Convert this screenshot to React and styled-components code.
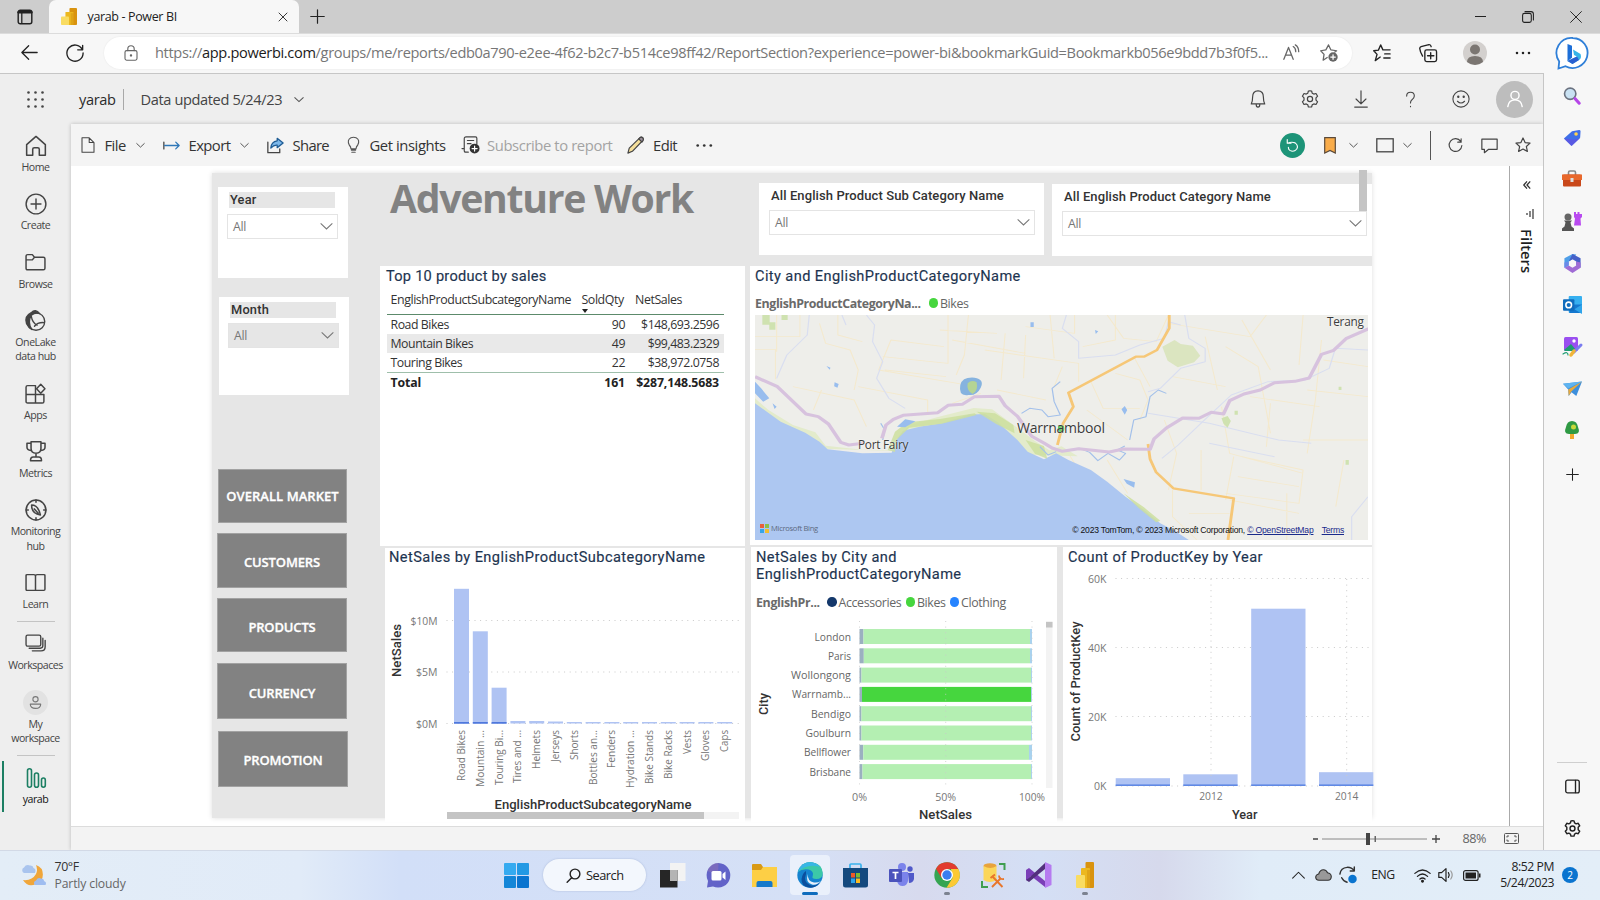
import React from "react";
import styled, { createGlobalStyle, css } from "styled-components";

const UI = `"Open Sans", "Noto Sans", sans-serif`;
const DIN = `Roboto, "Liberation Sans", sans-serif`;

const Global = createGlobalStyle`
  * { box-sizing: border-box; }
  html, body { margin: 0; padding: 0; }
  body { width: 1600px; height: 900px; overflow: hidden; font-family: ${UI}; color: #333; background: #fff; }
  svg { display: block; flex: none; overflow: visible; }
`;

/* ---------- shell ---------- */
const Screen = styled.div`
  width: 1600px; height: 900px; display: flex; flex-direction: column; overflow: hidden;
`;
const TabStrip = styled.header`
  height: 33px; flex: none; background: #cdcdcd; display: flex; align-items: center;
`;
const Slot = styled.div`
  width: ${p => p.$w}px; flex: none; display: flex; align-items: center; white-space: nowrap;
  padding-left: ${p => p.$pl || 0}px; margin-top: ${p => p.$mt || 0}px;
  justify-content: ${p => (p.$start ? "flex-start" : p.$end ? "flex-end" : "center")};
`;
const BrowserTab = styled.div`
  width: 250px; height: 33px; background: #f7f7f7; border-radius: 7px 7px 0 0; display: flex; align-items: center;
  padding-left: 12px;
`;
const TabTitle = styled.span`
  width: 190px; margin-left: 10.5px; font-size: 12.5px; letter-spacing: -0.36px; color: #222; white-space: nowrap;
`;
const Spacer = styled.div` flex: 1; `;
const AddressRow = styled.div`
  height: 40px; flex: none; background: #f7f7f7; border-top: 1px solid #dcdcdc; display: flex; align-items: center; padding-bottom: 2px;
`;
const AddressPill = styled.div`
  width: 1248px; height: 32px; flex: none; border-radius: 16px; background: #fff; display: flex; align-items: center;
  box-shadow: 0 0 2px rgba(0,0,0,.08);
`;
const Url = styled.span`
  width: 1120px; font-size: 14.6px; line-height: 20px; padding-bottom: 2px; letter-spacing: -0.345px; color: #767676; white-space: nowrap;
  b { font-weight: 400; color: #1b1b1b; }
`;
const Body = styled.div` height: 777px; flex: none; display: flex; `;
const Site = styled.main`
  width: 1544px; flex: none; background: #eee; border-top: 1px solid #c6c6c6; border-right: 1px solid #c6c6c6;
  display: flex; flex-direction: column;
`;

/* ---------- Power BI chrome ---------- */
const AppHeader = styled.div` height: 50px; flex: none; display: flex; align-items: center; `;
const HeaderText = styled.span`
  font-size: 14.6px; letter-spacing: -0.38px; color: ${p => (p.$dark ? "#2b2b2b" : "#444")}; white-space: nowrap;
`;
const VLine = styled.div` width: 1px; height: ${p => p.$h}px; background: ${p => p.$c || "#a8a8a8"}; `;
const Avatar = styled.div`
  width: 37px; height: 37px; border-radius: 50%; background: #bdbdbd; display: flex; align-items: center; justify-content: center;
`;
const AppBody = styled.div` flex: 1; display: flex; min-height: 0; `;
const Nav = styled.nav`
  width: 71px; flex: none; display: flex; flex-direction: column; align-items: center; padding-top: 10.5px;
`;
const NavItem = styled.div`
  width: 71px; margin-bottom: 18.3px; display: flex; flex-direction: column; align-items: center; gap: 3.5px;
  position: relative; flex: none;
  ${p => p.$active && css`
    &::before { content: ""; position: absolute; left: 2px; top: -6px; width: 2px; height: 51px; background: #1c7f63; }
  `}
`;
const NavIcon = styled.div` height: 22px; display: flex; align-items: center; justify-content: center; `;
const NavLabel = styled.div`
  font-size: 10.6px; line-height: 14.5px; letter-spacing: -0.48px; text-align: center; white-space: pre-line;
  color: ${p => (p.$active ? "#111" : "#444")};
`;
const NavDivider = styled.div` width: 38px; height: 1px; flex: none; background: #c4c4c4; margin: -9px 0 11px; `;
const PersonDisc = styled.div`
  width: 25px; height: 25px; flex: none; border-radius: 50%; background: #e2e2e2; display: flex; align-items: center; justify-content: center;
`;
const Workspace = styled.section`
  flex: 1; display: flex; flex-direction: column; min-width: 0; background: #fff; box-shadow: 0 0 4px rgba(0,0,0,.22); clip-path: inset(-4px 0 0 -6px);
`;
const Toolbar = styled.div` height: 42px; flex: none; background: #f4f4f4; display: flex; align-items: center; padding-left: 9px; `;
const ToolText = styled.span`
  font-size: 14.8px; letter-spacing: ${p => p.$ls ?? -0.55}px; color: ${p => (p.$off ? "#a3a3a3" : "#333")}; white-space: nowrap;
`;
const ResetButton = styled.div`
  width: 25px; height: 25px; border-radius: 50%; background: #1d9478; display: flex; align-items: center; justify-content: center;
`;
const CanvasRow = styled.div` flex: 1; display: flex; min-height: 0; `;
const Canvas = styled.div` width: 1438px; flex: none; padding: 7px 0 0 141px; `;
const FilterPane = styled.aside`
  flex: 1; border-left: 1px solid #aaa; display: flex; flex-direction: column; align-items: center; padding-top: 15px; background: #fff;
`;
const FilterTitle = styled.span`
  writing-mode: vertical-rl; font-size: 14.8px; line-height: 20px; letter-spacing: 0; font-weight: 600; color: #1e1e1e; margin-top: 10px;
`;
const StatusBar = styled.div`
  height: 24px; flex: none; background: #f3f3f3; border-top: 1px solid #dcdcdc; display: flex; align-items: center; justify-content: flex-end;
`;
const ZoomText = styled.span` font-size: 12.6px; letter-spacing: -0.5px; color: #666; `;

/* ---------- report ---------- */
const Report = styled.div`
  width: 1160px; height: 645px; background: #e6e6e6; display: flex; box-shadow: 0 0 5px rgba(0,0,0,.13);
`;
const Rail = styled.div` width: 168px; flex: none; padding: 14px 0 0 6px; display: flex; flex-direction: column; `;
const RailSlicer = styled.div`
  width: ${p => p.$w}px; height: ${p => p.$h}px; flex: none; background: #fff; padding: ${p => p.$pad};
  margin: ${p => p.$m || 0}; display: flex; flex-direction: column;
`;
const RailSlicerTitle = styled.div`
  width: 106px; height: 16px; margin-left: 2px; background: #e6e6e6; font: 500 12.8px/16px ${DIN}; letter-spacing: .2px; color: #333; padding-left: 1px;
`;
const Dropdown = styled.div`
  width: ${p => p.$w}px; height: 25px; margin-top: ${p => p.$mt}px; flex: none; border: 1px solid #e4e4e4;
  background: ${p => (p.$gray ? "#e6e6e6" : "#fff")}; display: flex; align-items: center; justify-content: space-between;
  padding: 0 4px 0 5px; font-size: 12.3px; letter-spacing: -0.3px; color: #777;
`;
const PageButton = styled.button`
  width: ${p => p.$w}px; height: ${p => p.$h}px; margin: ${p => p.$m}; padding: ${p => p.$pt ?? 2}px 0 0; flex: none; border: 1px solid #a2a2a2; background: #828282;
  color: #fff; font: 600 13px/1 ${UI}; -webkit-text-stroke: .3px #fff; letter-spacing: ${p => p.$ls ?? -0.15}px; white-space: nowrap;
`;
const MainArea = styled.div` width: 992px; flex: none; display: flex; flex-direction: column; `;
const ReportHead = styled.div` height: 93px; flex: none; display: flex; `;
const ReportTitle = styled.h1`
  width: 379px; margin: -3px 0 0; padding-left: 10px; font: 700 39.2px/56px ${UI}; letter-spacing: -1.3px; color: #828282; white-space: nowrap;
`;
const TopSlicer = styled.div`
  width: ${p => p.$w}px; height: 72px; margin: ${p => p.$m}; flex: none; background: #fff; padding: 4px 0 0 10px; position: relative;
`;
const TopSlicerTitle = styled.div` padding-left: 2px; font: 500 13px/17px ${DIN}; letter-spacing: .1px; color: #333; white-space: nowrap; `;
const ScrollThumb = styled.div` position: absolute; left: 307px; top: -14px; width: 8px; height: 41px; background: #c4c4c4; `;
const CardRow = styled.div` display: flex; flex: none; `;
const Card = styled.section`
  width: ${p => p.$w}px; height: ${p => p.$h}px; margin: ${p => p.$m || 0}; flex: none; background: #fff; padding: ${p => p.$pad || 0};
`;
const CardTitle = styled.h2`
  margin: 0; padding: ${p => p.$pad || 0}; font: 400 14.6px/17px ${DIN}; letter-spacing: ${p => p.$ls ?? 0.3}px; color: #1d3450;
  -webkit-text-stroke: .15px #1d3450; white-space: pre-line;
`;
const Legend = styled.div`
  display: flex; align-items: center; height: 16px; margin: ${p => p.$m}; font-size: 12.4px; letter-spacing: -0.38px; color: #666; white-space: nowrap;
`;
const LegendName = styled.b` width: ${p => p.$w}px; font-weight: 700; color: #6a6a6a; letter-spacing: ${p => p.$ls ?? -0.4}px; `;
const LegendItem = styled.span`
  width: ${p => p.$w}px; display: flex; align-items: center; gap: 2px;
  &::before { content: ""; width: 9.5px; height: 9.5px; flex: none; border-radius: 50%; background: ${p => p.$c}; }
`;
/* plot area that begins inside the title's first line */
const Plot = styled.div` margin-top: -${p => p.$up}px; `;
const Table = styled.div` width: 337px; margin-left: 1px; font-size: 12.3px; letter-spacing: -0.45px; color: #333; `;
const TRow = styled.div`
  display: grid; grid-template-columns: 191px 49px 97px; align-items: center; height: ${p => p.$h}px; white-space: nowrap;
  background: ${p => (p.$shade ? "#e9e9e9" : "none")};
  border-top: ${p => (p.$line ? `1px solid ${p.$line}` : "0")};
  font-weight: ${p => (p.$bold ? 700 : 400)}; color: ${p => (p.$bold ? "#222" : "#333")};
  letter-spacing: ${p => (p.$bold ? "-0.12px" : "inherit")};
  & > :first-child { padding-left: 3.5px; }
`;
const Num = styled.span` text-align: right; padding-right: ${p => p.$r}px; `;
const HeadCell = styled.span` font-size: 12.4px; letter-spacing: -0.42px; padding-left: ${p => p.$l || 0}px; position: relative; `;
const SortMark = styled.i`
  position: absolute; left: 4px; top: 18px; border: 3.5px solid transparent; border-top: 4px solid #222; border-bottom: 0;
`;
const MapBox = styled.div` width: 613px; height: 225px; margin-top: 4px; position: relative; overflow: hidden; background: #eeeeea; `;
const MapLabel = styled.span`
  position: absolute; left: ${p => p.$x}px; top: ${p => p.$y}px; font-size: ${p => p.$s}px; line-height: ${p => p.$lh || 16}px; letter-spacing: -0.25px;
  color: #3c3c3c; white-space: nowrap; text-shadow: 0 0 2px #fff;
`;
const MapCredit = styled.div`
  position: absolute; right: 24px; bottom: 4px; font: 8.6px/12px "Liberation Sans", sans-serif; letter-spacing: -0.21px; color: #111; white-space: nowrap;
  u { color: #1a2a8a; margin-right: 3px; } u + u { margin: 0 0 0 3px; }
`;
const MapBrand = styled.div`
  position: absolute; left: 5px; bottom: 6px; display: flex; align-items: center; gap: 2px; font-size: 7.6px; line-height: 11px; letter-spacing: -0.3px; color: #5c6a80;
`;

/* ---------- edge sidebar + taskbar ---------- */
const EdgeBar = styled.aside` flex: 1; background: #f7f7f7; display: flex; flex-direction: column; align-items: center; padding-top: 2px; `;
const EdgeItem = styled.div` height: ${p => p.$h || 41.8}px; display: flex; align-items: center; flex: none; `;
const EdgeDivider = styled.div` width: 30px; height: 1px; background: #cfcfcf; margin-bottom: 2px; `;
const Taskbar = styled.footer`
  height: 50px; flex: none; border-top: 1px solid #d2d9e6; display: flex; align-items: center; padding-bottom: 1px;
  background: linear-gradient(90deg, #e3edf7 0, #e1ebf8 300px, #d2dff8 400px, #d5e0f6 800px, #d7daee 920px, #d4dff5 1040px, #d6d9ec 1160px, #e0ecf8 1260px, #e3eef8 1600px);
`;
const Weather = styled.div`
  width: 449px; font-size: 12.4px; line-height: 16.5px; letter-spacing: -0.4px; color: #333; padding-top: 1px;
  small { display: block; font-size: 12.2px; color: #666; letter-spacing: -0.15px; }
`;
const SearchPill = styled.div`
  width: 103px; height: 32px; flex: none; border-radius: 16px; background: #f3f7fd; box-shadow: 0 0 2px rgba(90,110,160,.35);
  display: flex; align-items: center; padding-left: 23px; gap: 5px; font-size: 12.8px; letter-spacing: -0.5px; color: #222;
`;
const AppIcon = styled.div`
  width: 40px; height: 40px; margin: 0 2.9px; flex: none; border-radius: 4px; display: flex; align-items: center; justify-content: center; position: relative;
  background: ${p => (p.$on ? "#eaf0fb" : "none")};
  &::after { content: ""; position: absolute; bottom: 0; width: ${p => (p.$on ? 16 : 6)}px; height: 3px; border-radius: 2px;
    background: ${p => (p.$on ? "#0f6cbd" : p.$run ? "#7c8290" : "transparent")}; }
`;
const TrayText = styled.div` font-size: 12.2px; line-height: 16.5px; letter-spacing: -0.45px; color: #222; text-align: right; white-space: nowrap; `;
const Badge = styled.div` width: 16px; height: 16px; border-radius: 50%; background: #0a74cf; color: #fff; font-size: 10px; line-height: 16px; text-align: center; `;

/* ---------- icons ---------- */
const Ico = ({ s = 20, h, vb = 20, c = "#444", w = 1.2, children }) => (
  <svg width={s} height={h || s} viewBox={`0 0 ${vb} ${vb}`} fill="none" stroke={c} strokeWidth={w} strokeLinecap="round" strokeLinejoin="round">{children}</svg>
);
const Chevron = ({ s = 10, c = "#555", w = 1.1 }) => (
  <svg width={s} height={s / 2} viewBox="0 0 10 5" fill="none" stroke={c} strokeWidth={w}><path d="M.5.3 5 4.6 9.5.3" /></svg>
);
const DropChevron = () => <Chevron s={13} c="#777" w={0.8} />;
const gearPath = "M10 1.8l1.6.2.6 2.2 1.6.9 2.2-.6 1.6 2.7-1.6 1.6v2.4l1.6 1.6-1.6 2.7-2.2-.6-1.6.9-.6 2.2H8.4l-.6-2.2-1.6-.9-2.2.6-1.6-2.7L4 11.2V8.8L2.4 7.2 4 4.5l2.2.6 1.6-.9.6-2.2z";
const Gear = ({ s, c, w }) => <Ico s={s} c={c} w={w}><path d={gearPath} /><circle cx="10" cy="10" r="2.6" /></Ico>;
const PbiLogo = ({ w = 16, h = 18 }) => (
  <svg width={w} height={h} viewBox="0 0 18 26" preserveAspectRatio="none">
    <rect x="9.5" y="0" width="8.5" height="26" rx="1" fill="#d9930f" />
    <rect x="5" y="6" width="9" height="20" rx="1" fill="#ecb81f" />
    <path d="M0 14q0-1 1-1h7q1 0 1 1v12H1q-1 0-1-1z" fill="#f9dc62" />
    <path d="M14 8v18h-3V8z" fill="#c97f0b" opacity=".35" />
  </svg>
);

const navTop = [
  ["Home", <Ico s={22} w={1.4}><path d="M1.500 8.800 10 1.300l8.500 7.500V18.500h-5.500v-5.500a1.500 1.500 0 0 0-1.500-1.500h-3A1.500 1.500 0 0 0 7 13v5.500H1.500z" /></Ico>],
  ["Create", <Ico s={22} w={1.3}><circle cx="10" cy="10" r="9" /><path d="M10 5.500v9M5.500 10h9" /></Ico>],
  ["Browse", <Ico s={21} w={1.4}><path d="M1 4q0-1.500 1.500-1.500h4.500l2 2.500h8.500Q19 5 19 6.500v9q0 1.500-1.500 1.500h-15Q1 17 1 15.500zM1 7.500h6L9 5" /></Ico>],
  ["OneLake\ndata hub", <Ico s={21} w={1.3}><path d="M6 2.500Q-1 6 1.500 13q2 4 5 5.500Q2 12 6 5q4-3 8-1.500Q10-1.500 6 2.500z" fill="#444" /><circle cx="10.500" cy="11" r="8.300" /><path d="M6 6q1 6 5.500 8.500M9 15.500q3-4 9.500-3.500" /></Ico>],
  ["Apps", <Ico s={21} w={1.4}><path d="M1 4q0-1.500 1.500-1.500H10v8.500H1zM1 11h9v8H2.500Q1 19 1 17.500zM10 11h8v6.500q0 1.500-1.500 1.500H10z" /><path d="m15 1.200 4 4.300-4 4.300-4-4.300z" /></Ico>],
  ["Metrics", <Ico s={22} w={1.4}><path d="M5.500 1.500h9v6q0 4.500-4.500 4.500T5.500 7.500zM5.500 3H1.800v3.500q0 2.500 3.700 3M14.500 3h3.700v3.500q0 2.500-3.700 3M10 12v3.500M5 18.800q0-3.300 2.500-3.300h5q2.500 0 2.500 3.300z" /></Ico>],
  ["Monitoring\nhub", <Ico s={22} w={1.4}><circle cx="10" cy="10" r="9" /><path d="M6 5.500q6 0 8 9-8-1-8-9zM10 1v2M10 17v2M1 10h2M17 10h2M8.500 9l3.500 4" /></Ico>],
  ["Learn", <Ico s={21} w={1.4}><path d="M1 3.500Q1 2.500 2 2.500h6.500q1.500 0 1.500 1.500v13.500H2q-1 0-1-1zM19 3.500q0-1-1-1h-6.500Q10 2.500 10 4v13.500h8q1 0 1-1z" /></Ico>],
];

function NavButton({ label, icon, active }) {
  return <NavItem $active={active}><NavIcon>{icon}</NavIcon><NavLabel $active={active}>{label}</NavLabel></NavItem>;
}

function SideNav() {
  return (
    <Nav>
      {navTop.map(([l, i]) => <NavButton key={l} label={l} icon={i} />)}
      <NavDivider />
      <NavButton label="Workspaces" icon={<Ico s={21} w={1.3}><rect x="1" y="2" width="14" height="10.500" rx="1.500" /><path d="M17 5v7q0 2.500-2.500 2.500H4M19.200 7v6q0 4-4 4H7" /></Ico>} />
      <NavButton label={"My\nworkspace"} icon={<PersonDisc><Ico s={13} w={1.7} c="#777"><circle cx="10" cy="5" r="4" /><path d="M2 12.500h16q0 6.500-8 6.500t-8-6.500z" /></Ico></PersonDisc>} />
      <NavDivider />
      <NavButton active label="yarab" icon={<Ico s={20} w={1.6} c="#1c7f63"><rect x="1.500" y=".8" width="4" height="18.400" rx="2" /><rect x="8.500" y="5" width="4" height="14.200" rx="2" /><rect x="15.500" y="10" width="3.800" height="9.200" rx="1.900" /></Ico>} />
    </Nav>
  );
}

function ReportToolbar() {
  return (
    <Toolbar>
      <Slot $w={24.5} $start><Ico s={16} h={18} w={1.3}><path d="M2.500 1h9l6 6v12h-15zM11.500 1v6h6" /></Ico></Slot>
      <Slot $w={31} $start><ToolText>File</ToolText></Slot>
      <Slot $w={27} $start><Chevron s={9} /></Slot>
      <Slot $w={26} $start><Ico s={17} c="#2e77b8" w={1.5}><path d="M1 6v8" stroke="#444" /><path d="M2 10h17M15 6l4 4-4 4" /></Ico></Slot>
      <Slot $w={51} $start><ToolText>Export</ToolText></Slot>
      <Slot $w={27} $start><Chevron s={9} /></Slot>
      <Slot $w={26} $start>
        <Ico s={17} w={1.5}><path d="M1 6v12.500h14V14" /><path d="M12 1.500 19 7l-7 5.500V9.500Q8 9 4.500 13 5 5.500 12 4.500z" fill="#7db8ea" stroke="#205d95" /></Ico>
      </Slot>
      <Slot $w={52} $start><ToolText $ls={-0.65}>Share</ToolText></Slot>
      <Slot $w={25} $start><Ico s={17} h={18} w={1.3} c="#555"><path d="M7 14.500Q7 12 5 10 2 4 7 1.500q3-1.200 6 0Q18 4 15 10q-2 2-2 4.500zM7.500 16h5M8 18.500h4" /></Ico></Slot>
      <Slot $w={92} $start><ToolText $ls={-0.42}>Get insights</ToolText></Slot>
      <Slot $w={25.5} $start>
        <Ico s={18} w={1.3}><path d="M7 18H4q-1.500 0-1.500-1.500V14H0M2.500 14V3Q2.500 1 4.500 1H15q1.500 0 1.500 1.500V9M6 5h7M6 8.500h4" /><circle cx="14" cy="14" r="5.500" fill="#333" stroke="none" /><path d="M14 11.200v5.600M11.200 14h5.600" stroke="#fff" /></Ico>
      </Slot>
      <Slot $w={140} $start><ToolText $off $ls={-0.4}>Subscribe to report</ToolText></Slot>
      <Slot $w={26} $start><Ico s={18} w={1.3}><path d="M1 19l1.500-5.500L14.500 1.800q1.500-1.300 3 0 1.500 1.700 0 3.200L6 17z" fill="#f5df9a" /><path d="m13 3.200 3.600 3.500 1-1.200q1.300-2-.2-3.600-1.800-1.300-3.200.2z" fill="#9a8f9a" /></Ico></Slot>
      <Slot $w={43} $start><ToolText>Edit</ToolText></Slot>
      <Slot $w={18} $start><Ico s={17}><g fill="#333" stroke="none"><circle cx="2" cy="10" r="1.600" /><circle cx="9.700" cy="10" r="1.600" /><circle cx="17.400" cy="10" r="1.600" /></g></Ico></Slot>
      <Spacer />
      <Slot $w={56}><ResetButton><Ico s={15} c="#fff" w={1.5}><path d="M3 2v5h5M3.500 7Q9 4.500 13.500 6.500q5 4 2 8.500-4 4.500-9 1.500-2-1.500-2-4" /></Ico></ResetButton></Slot>
      <Slot $w={19}><svg width="12" height="17" viewBox="0 0 12 17"><path d="M.7.700h10.600v15.300L6 13.500.7 16z" fill="#f9ac4a" stroke="#5b4a3a" strokeWidth="1.200" /></svg></Slot>
      <Slot $w={27}><Chevron s={9} /></Slot>
      <Slot $w={36}><svg width="18" height="15"><rect x=".8" y=".8" width="16.400" height="13" fill="none" stroke="#444" strokeWidth="1.300" /></svg></Slot>
      <Slot $w={24.5} $start><Chevron s={9} /></Slot>
      <Slot $w={7}><VLine $h={29} $c="#555" /></Slot>
      <Slot $w={43}><Ico s={15} w={1.5}><path d="M17 4.500A8.500 8.500 0 1 0 18.500 10M17.500 1v4.500H13" /></Ico></Slot>
      <Slot $w={25}><Ico s={17} w={1.4}><path d="M1 2.500h18v12H9l-5 4v-4H1z" /></Ico></Slot>
      <Slot $w={41}><Ico s={16} w={1.5}><path d="m10 1.200 2.600 5.800 6.200.7-4.600 4.200 1.300 6.200L10 15l-5.500 3.100 1.300-6.200L1.200 7.700 7.400 7z" /></Ico></Slot>
    </Toolbar>
  );
}

/* ---------- charts ---------- */
const Grid = props => <line stroke="#c9c9c9" strokeWidth="1" strokeDasharray="1 4.600" {...props} />;
const T = ({ w, s = 11, f = UI, c = "#777", children, ...r }) => (
  <text fontSize={s} fontFamily={f} fill={c} {...(w ? { textLength: w, lengthAdjust: "spacingAndGlyphs" } : {})} {...r}>{children}</text>
);

const subcats = [
  ["Road Bikes", 134.7, 51], ["Mountain ...", 92.2, 57], ["Touring Bi...", 35.8, 55], ["Tires and ...", 2.5, 53], ["Helmets", 2.5, 39],
  ["Jerseys", 2, 32], ["Shorts", 1.5, 30], ["Bottles an...", 1.5, 55], ["Fenders", 1.5, 38], ["Hydration ...", 1.5, 58],
  ["Bike Stands", 1.5, 54], ["Bike Racks", 1.5, 49], ["Vests", 1.5, 24], ["Gloves", 1.5, 31], ["Caps", 1.5, 22],
];

/* chart viewBoxes use page coordinates, starting at the plot's own corner */
function SubcategoryChart() {
  return (
    <svg width="360" height="274" viewBox="385 548 360 274">
      {[620.5, 672, 723.5].map(y => <Grid key={y} x1="446.500" x2="739.500" y1={y} y2={y} />)}
      {[["$10M", 620.5, 27], ["$5M", 672, 21.5], ["$0M", 723.5, 21.5]].map(([t, y, w]) => <T key={t} x="437.500" y={y + 4} textAnchor="end" w={w}>{t}</T>)}
      {subcats.map(([n, h, w], i) => {
        const x = 454 + i * 18.8;
        return (
          <g key={n}>
            <rect x={x} y={723.5 - h} width="15" height={h} fill="#afc3f3" />
            {i < 3 && <rect x={x} y="722" width="15" height="1.700" fill="#4f78dd" />}
            <T transform={`translate(${x + 11} 730) rotate(-90)`} textAnchor="end" w={w} s={10.8}>{n}</T>
          </g>
        );
      })}
      <T f={DIN} s={13} c="#333" fontWeight="500" w={53} transform="translate(400.500 650.500) rotate(-90)" textAnchor="middle">NetSales</T>
      <T f={DIN} s={13} c="#333" fontWeight="500" w={197} x="593" y="808.500" textAnchor="middle">EnglishProductSubcategoryName</T>
      <rect x="447" y="812" width="292" height="7" fill="#f3f3f3" />
      <rect x="447" y="812" width="257" height="7" fill="#c4c4c4" />
    </svg>
  );
}

const cities = [
  ["London", 4, 2, 36.5], ["Paris", 4.3, 2, 23], ["Wollongong", 2, 1, 60], ["Warrnamb...", 2.5, 1, 59],
  ["Bendigo", 2, 1, 40], ["Goulburn", 2, 1, 45.5], ["Bellflower", 3.8, 3, 47], ["Brisbane", 3, 1, 41.5],
];
function CityChart() {
  return (
    <svg width="306" height="207" viewBox="751 615 306 207">
      {cities.map(([n, a, b, w], i) => {
        const y = 629 + i * 19.3, on = i === 3;
        return (
          <g key={n}>
            <rect x="859.500" y={y} width={a} height="15" fill="#9bb0c0" />
            <rect x={859.5 + a} y={y} width={172.5 - a - b} height="15" fill={on ? "#46d63e" : "#b4efb2"} />
            <rect x={1032 - b} y={y} width={b} height="15" fill="#a9d2ee" />
            <T x="851" y={y + 11.5} textAnchor="end" w={w} c="#666">{n}</T>
          </g>
        );
      })}
      {[859.5, 945.7, 1032].map(x => <Grid key={x} x1={x} x2={x} y1="621" y2="788" strokeOpacity=".8" />)}
      <T x="859.500" y="801" textAnchor="middle" w={15}>0%</T>
      <T x="945.700" y="801" textAnchor="middle" w={21}>50%</T>
      <T x="1032" y="801" textAnchor="middle" w={26}>100%</T>
      <T f={DIN} s={13} c="#333" fontWeight="500" w={53} x="945.500" y="819" textAnchor="middle">NetSales</T>
      <T f={DIN} s={13} c="#333" fontWeight="500" w={22} transform="translate(767.500 704) rotate(-90)" textAnchor="middle">City</T>
      <rect x="1046" y="621" width="6.500" height="167" fill="#f3f3f3" />
      <rect x="1046" y="622" width="6.500" height="5.500" fill="#c4c4c4" />
    </svg>
  );
}

function YearChart() {
  return (
    <svg width="309" height="274" viewBox="1063 548 309 274">
      {[["60K", 578.5], ["40K", 647.5], ["20K", 716.5], ["0K", 786]].map(([t, y]) => (
        <g key={t}>
          <Grid x1="1115.500" x2="1373" y1={y} y2={y} />
          <T x="1106.500" y={y + 4} textAnchor="end" w={t === "0K" ? 12.5 : 18.5}>{t}</T>
        </g>
      ))}
      {[[1115.7, 7.8], [1183.3, 11.7], [1251.2, 177.3], [1319, 13.8]].map(([x, h]) => (
        <g key={x}>
          <rect x={x} y={786 - h} width="54.300" height={h} fill="#afc3f3" />
          <rect x={x} y="784.400" width="54.300" height="1.600" fill="#6089e4" />
        </g>
      ))}
      {[1211, 1346.7].map(x => <Grid key={x} x1={x} x2={x} y1="579" y2="786" />)}
      <T x="1211" y="800" textAnchor="middle" w={23.5}>2012</T>
      <T x="1346.700" y="800" textAnchor="middle" w={23.5}>2014</T>
      <T f={DIN} s={13} c="#333" fontWeight="500" w={25.5} x="1244.700" y="818.500" textAnchor="middle">Year</T>
      <T f={DIN} s={13} c="#333" fontWeight="500" w={120} transform="translate(1080 681.500) rotate(-90)" textAnchor="middle">Count of ProductKey</T>
    </svg>
  );
}

function MapDrawing() {
  return (
    <svg width="613" height="225" viewBox="37 165 1502 675" preserveAspectRatio="none" fill="none" strokeLinejoin="round">
      <g stroke="#f4e9cd" strokeWidth="2.600">
        <path d="M37 230h110V165M37 268h50v90M90 165v110M195 190l15 60 60 20 20 60-10 60M240 165v60l60 20M370 240l-30 90 240 50M370 240l130 20M350 290l160 20v-145M355 330l150 20M490 210l140 10M520 240l180 40M560 165l-10 120-20 60M650 220l-10 140M700 225l-5 130M600 270l230 40v55M760 165l10 130M700 200l120 20v-55M840 260l80-20v-75M900 165l40 70 80 10 30-80" />
        <path d="M790 320l-20 60M860 365l30 80h90M920 340l60 20 20 60-20 60M965 290l40 90M1050 190l200 40 40-65M1140 230l30 160M1060 350l130 30M1190 260l80 60 30 200M1230 180l70 150M1380 165l-10 150M1425 240l-15 180-20 160M1250 410l170 30M1300 430l-10 130M1180 440l20 140 180 60M1040 480l30 100-20 110M1130 570v120M1210 590l-20 130M1230 590l150 40-10 100-180-30M1220 650l150 30M1200 720l170 40M1380 540h159M1390 390l149 20M1430 300l109 20M1340 700v140M1480 600l-20 140M1100 760h100M1060 690v80l60 70M130 380l150 40 30 80M200 390l-20 60M290 380l170 40v40M520 430l70-30M630 390l120 30M850 450l100 90M800 570l60 120M900 600l50 100" />
      </g>
      <g stroke="#d9def0" strokeWidth="3">
        <path d="M170 165l-5 60-50 60-25 70M310 165l20 30-5 50 25 60-15 50 30 60 40 30M800 165l-10 40 40 40v50l90-10 60-30 60-20 10-50 30 10M1090 165l10 70 40 30v40l-60 20-50 60-30 10M1539 270l-80-5-15 60-60 35-90 5-90 40-70 80-60 70-40 40M1000 460l150 30 170 50 80 10M1539 710l-40 60v70M1150 550l160 40M250 165l10 30" />
      </g>
      <path d="M37 415L70 450l60 45 55 22 25 40 90 12 80 2 8-30 25-45 70-24 90-28 45 4 45 40 60 55 35 28 30-12 40 30L37 560z" fill="#e3ebcb" />
      <path d="M37 430L100 485 160 518 195 545 215 568 300 580 372 578 380 545 400 512 440 500 495 490 560 464 600 462 632 487 680 540 705 575 745 598 775 580 805 600 860 630 900 665 945 710 990 750 1030 790 1065 812 1100 840H37z" fill="#adc7f1" />
      <path d="M362 570l18-55 30-28 80-10 85-17 5 5-85 26-80 12-30 35-5 38zM580 455l45 5 45 35 3 25-45-28zM700 540l45 18 8 38-30-15zM940 700l50 42 40 40-10 5-45-45z" fill="#cddf9f" opacity=".85" />
      <path d="M1035 260l30-20 15 12 30 5 18 30-15 20-40 15-25-20z" fill="#dbe5c0" />
      <path d="M55 165h18v22h14v22h-15v-15H55zM102 165h15v15h-15zM1180 475l15-7 8 15-8 20-10-12zM1484 600h8v14h-8zM1467 380h7v10h-7zM1212 452h8v12h-8z" fill="#cfe2b0" />
      <path d="M540 375q5-25 35-22 25 5 15 30-10 25-30 22-25 5-20-30z" fill="#86b3df" />
      <path d="M558 370q10-12 22-3 5 25-10 35-15-10-12-32z" fill="#b4d494" />
      <g fill="#98bdee">
        <path d="M37 365l15 20 20 30-15 10-20-25zM80 430l10 10-5 7zM232 367l10 5-3 11-8-4zM385 500l20-22 25 6-25 18zM935 448l8-10 6 12-6 14zM712 187h8v14h-8zM940 657l28 10-2 16-18-12zM870 210l8 4-6 8zM212 318l10 5-2 6z" />
      </g>
      <g stroke="#a3c0ea" strokeWidth="3">
        <path d="M690 460l20-15 30 5 15 20 30-5-15-40-5-40 20-20M812 570l20-5 25 12 20 25 25-22 28 20 15-20-20-10 18-12M955 540l10-60 30-10 10-60 20-20 20 10M345 490l10 20-5 30M735 560l20 25 20-10" />
      </g>
      <g strokeLinecap="butt">
        <path d="M1052 165v40l-30 65-32 20-20 0-165 108 12 42-25 50-14 65M1000 552l5 45 15 40 42 48 148 30-14 125" stroke="#f6c777" strokeWidth="7" />
        <path d="M37 350l55 30 70 82 30 8 25 22 30 55 20 8 35-5M348 535l10-40 18-17 24-12 85-8 25-22 35-3 30-23 60-1 15 28 30 32 35 60 30 20 20 15 25 10 40-8 75 10 35-9 65 1 10-32 30-32 40-30 40 1 30-18 30 5 15-40 35-20 40-12 35-22 50-4 35-10 30-71 30-12 30-35 75-40" stroke="#d7c2de" strokeWidth="9" />
      </g>
      <ellipse cx="787" cy="506" rx="8" ry="10" fill="#2fc32f" />
    </svg>
  );
}

function ReportPage() {
  return (
    <Report>
      <Rail>
        <RailSlicer $w={130} $h={91} $pad="5px 9px 0">
          <RailSlicerTitle>Year</RailSlicerTitle>
          <Dropdown $w={111} $mt={6}>All<DropChevron /></Dropdown>
        </RailSlicer>
        <RailSlicer $w={130} $h={98} $pad="5px 9px 0 9px" $m="19px 0 0 1px">
          <RailSlicerTitle>Month</RailSlicerTitle>
          <Dropdown $w={111} $mt={5} $gray>All<DropChevron /></Dropdown>
        </RailSlicer>
        <PageButton $w={129} $h={54} $m="73.500px 0 0" $ls={0.05}>OVERALL MARKET</PageButton>
        <PageButton $w={130} $h={55} $m="10px 0 0 -1px" $pt={5}>CUSTOMERS</PageButton>
        <PageButton $w={130} $h={54} $m="10.500px 0 0 -1px" $pt={4}>PRODUCTS</PageButton>
        <PageButton $w={130} $h={56} $m="11px 0 0 -1px" $pt={4}>CURRENCY</PageButton>
        <PageButton $w={130} $h={56} $m="11.500px 0 0" $pt={3}>PROMOTION</PageButton>
      </Rail>
      <MainArea>
        <ReportHead>
          <ReportTitle>Adventure Work</ReportTitle>
          <TopSlicer $w={285} $m="10px 0 0 0">
            <TopSlicerTitle>All English Product Sub Category Name</TopSlicerTitle>
            <Dropdown $w={266} $mt={6}>All<DropChevron /></Dropdown>
          </TopSlicer>
          <TopSlicer $w={320} $m="11px 0 0 8px">
            <TopSlicerTitle>All English Product Category Name</TopSlicerTitle>
            <Dropdown $w={305} $mt={6}>All<DropChevron /></Dropdown>
            <ScrollThumb />
          </TopSlicer>
        </ReportHead>
        <CardRow>
          <Card $w={365} $h={280} $pad="2px 0 0 6px">
            <CardTitle $ls={0.25}>Top 10 product by sales</CardTitle>
            <Table>
              <TRow $h={29}>
                <HeadCell>EnglishProductSubcategoryName</HeadCell>
                <HeadCell $l={3.5}>SoldQty<SortMark /></HeadCell>
                <HeadCell $l={8}>NetSales</HeadCell>
              </TRow>
              <TRow $h={20} $line="#5c8a6b"><span>Road Bikes</span><Num $r={2}>90</Num><Num $r={5}>$148,693.2596</Num></TRow>
              <TRow $h={19} $shade><span>Mountain Bikes</span><Num $r={2}>49</Num><Num $r={5}>$99,483.2329</Num></TRow>
              <TRow $h={19}><span>Touring Bikes</span><Num $r={2}>22</Num><Num $r={5}>$38,972.0758</Num></TRow>
              <TRow $h={20} $line="#9fbfab" $bold><span>Total</span><Num $r={2}>161</Num><Num $r={5}>$287,148.5683</Num></TRow>
            </Table>
          </Card>
          <Card $w={622} $h={279} $m="0 0 0 5px" $pad="2px 0 0 5px">
            <CardTitle $ls={0.4}>City and EnglishProductCategoryName</CardTitle>
            <Legend $m="10px 0 0">
              <LegendName $w={173.5}>EnglishProductCategoryNa...</LegendName>
              <LegendItem $w={60} $c="#46d63e">Bikes</LegendItem>
            </Legend>
            <MapBox>
              <MapDrawing />
              <MapLabel $x={103} $y={121} $s={11.8}>Port Fairy</MapLabel>
              <MapLabel $x={262} $y={105} $s={14}>Warrnambool</MapLabel>
              <MapLabel $x={572} $y={0} $s={11.8} $lh={12}>Terang</MapLabel>
              <MapBrand>
                <svg width="9" height="9"><path d="M0 0h4v4H0z" fill="#e8613a" /><path d="M5 0h4v4H5z" fill="#8bc04a" /><path d="M0 5h4v4H0z" fill="#35a5e8" /><path d="M5 5h4v4H5z" fill="#f2bd30" /></svg>
                Microsoft Bing
              </MapBrand>
              <MapCredit>© 2023 TomTom, © 2023 Microsoft Corporation, <u>© OpenStreetMap</u> <u>Terms</u></MapCredit>
            </MapBox>
          </Card>
        </CardRow>
        <CardRow>
          <Card $w={360} $h={274} $m="2px 0 0 5px">
            <CardTitle $pad="1px 0 0 4px" $ls={0.42}>NetSales by EnglishProductSubcategoryName</CardTitle>
            <Plot $up={18}><SubcategoryChart /></Plot>
          </Card>
          <Card $w={306} $h={275} $m="1px 0 0 6px">
            <CardTitle $pad="2px 0 0 5px" $ls={0.38}>{"NetSales by City and\nEnglishProductCategoryName"}</CardTitle>
            <Legend $m="11px 0 5px 5px">
              <LegendName $w={71} $ls={-0.35}>EnglishPr...</LegendName>
              <LegendItem $w={78.5} $c="#14386b">Accessories</LegendItem>
              <LegendItem $w={44} $c="#46d63e">Bikes</LegendItem>
              <LegendItem $w={60} $c="#2684ff">Clothing</LegendItem>
            </Legend>
            <CityChart />
          </Card>
          <Card $w={309} $h={275} $m="1px 0 0 6px">
            <CardTitle $pad="2px 0 0 5px" $ls={0.36}>Count of ProductKey by Year</CardTitle>
            <Plot $up={18}><YearChart /></Plot>
          </Card>
        </CardRow>
      </MainArea>
    </Report>
  );
}

/* ---------- edge sidebar icons ---------- */
const edgeIcons = [
  <Ico s={18}><circle cx="8" cy="7.500" r="6.300" fill="#c9e2f3" stroke="#6b7280" strokeWidth="1.800" /><path d="m13.500 13 4.500 5" stroke="#b646e8" strokeWidth="3.500" /></Ico>,
  <Ico s={18}><path d="M10 2.500 18 1q1.500 0 1.500 1.500L19 10l-9.500 9L1 10.500z" fill="#3f6fe8" stroke="none" /><path d="M1 10.500 9.500 19l9-8.500L12 12z" fill="#6a4be0" stroke="none" opacity=".6" /><circle cx="14.500" cy="5.500" r="2" fill="#ffd34d" stroke="none" /></Ico>,
  <Ico s={20}><path d="M6.500 6V3.500Q6.500 2 8 2h4q1.500 0 1.500 1.500V6" stroke="#888" strokeWidth="1.600" /><rect x="1" y="5.500" width="18" height="12" rx="1" fill="#c9481a" stroke="none" /><path d="M0 5.500h20v5.500H0z" fill="#e8682c" stroke="none" /><rect x="8.500" y="9" width="3" height="4" fill="#ddd" stroke="none" /></Ico>,
  <Ico s={20}><path d="M12 1h2v2h1.500V1h2v2H20V6l-1.500 1.500.5 7h-7l1-7L12 6z" fill="#b94af0" stroke="none" /><circle cx="6" cy="6" r="3.500" fill="#666" stroke="none" /><path d="M2 9.500h8l-1.500 2 1 4 2.500 2V20H0v-2.500l2.500-2 1-4z" fill="#555" stroke="none" /></Ico>,
  <Ico s={19}><path d="M10 0 1.500 4.500v10L6 12V8l4-2.500 4-5z" fill="#4f9fe8" stroke="none" /><path d="m10 0 8.500 4.500v10L14 12V8l-4-2.500L6 8z" fill="#4661c8" stroke="none" /><path d="M18.500 9v5.500L10 20l-8.500-5.500L6 12l4 2.500 4-2.500V8z" fill="#a06cd5" stroke="none" /><path d="M6 8v4l-4.500 2.500V9z" fill="#6c8ae8" stroke="none" /></Ico>,
  <Ico s={19}><rect x="6" y="1" width="14" height="18" rx="1" fill="#36b0f0" stroke="none" /><path d="M6 10h14l-1 9H7z" fill="#1478cf" stroke="none" /><path d="m20 10-8 5 8 5z" fill="#2fa4ea" stroke="none" /><rect x="0" y="4.500" width="12" height="12" rx="1" fill="#0f6cbd" stroke="none" /><circle cx="6" cy="10.500" r="3" stroke="#fff" strokeWidth="1.600" /></Ico>,
  <Ico s={20}><rect x="2" y="0" width="14" height="14" rx="1.500" fill="#9a4ff0" stroke="none" /><path d="m2 13 7-6 5 6v1H3z" fill="#1f9d72" stroke="none" /><circle cx="12" cy="4" r="1.700" fill="#fff" stroke="none" /><path d="m19 8-7 7" stroke="#7a7cf0" strokeWidth="3" /><path d="m12 14-3 4" stroke="#f0b53a" strokeWidth="3.500" /><path d="M1 17q5-3 5 1" stroke="#1f9d72" /></Ico>,
  <Ico s={19}><path d="M0 5 20 2.500 14 18l-5-4-3 4-.5-7z" fill="#3d8fdc" stroke="none" /><path d="M5.500 11 20 2.500 8.500 13.500 6 18z" fill="#e8a93c" stroke="none" /><path d="M0 5 20 2.500 5.500 10z" fill="#5fb4f0" stroke="none" /></Ico>,
  <Ico s={20}><path d="M8 13h4v6H8z" fill="#f0a92c" stroke="none" /><path d="M10 1q5 0 6 6 3 7-3 7H7q-6 0-3-7 1-6 6-6z" fill="#2f9a44" stroke="none" /><circle cx="11.500" cy="7" r="2.500" fill="#c7d93c" stroke="none" /></Ico>,
];

function BingLogo() {
  return (
    <svg width="32" height="33" viewBox="0 0 32 33">
      <path d="M16 1a15 15 0 1 1-7.500 28.200L1.500 31.500l.7-7A15 15 0 0 1 16 1z" fill="#fff" stroke="#2f7fd8" strokeWidth="1.800" />
      <path d="m10.500 7 4.500 1.800v12l-4.500 3.500z" fill="#1d6fd8" />
      <path d="m16 12.500 7.500 4.500q1.500 4-1.500 6l-6.500 4-5-3 9.500-4.500-3-1.500z" fill="#35b4e8" />
      <path d="M10.500 24l9.500-4.500 2 3.500-6.500 4z" fill="#2a5fd0" />
    </svg>
  );
}

/* ---------- taskbar icons ---------- */
const taskIcons = [
  { i: <svg width="26" height="25"><rect x="10" y="0" width="15.500" height="18" fill="#f3f3f3" /><rect x="0" y="7" width="17.500" height="17.500" fill="#262626" /><rect x="10" y="7" width="7.500" height="11" fill="#b4b4b4" /></svg> },
  { i: <svg width="25" height="25" viewBox="0 0 25 25"><path d="M12.500 0A12.300 12.300 0 1 1 7 23.500L1 24.500 2 18A12.300 12.300 0 0 1 12.500 0z" fill="#6263c8" /><path d="M12.500 0a12 12 0 0 0-11 8L12 12z" fill="#8a72b8" opacity=".6" /><rect x="5.500" y="8" width="10" height="9.500" rx="1.500" fill="#fff" /><path d="m16.500 11 3-2.500v8.500l-3-2.500z" fill="#fff" /></svg> },
  { i: <svg width="25" height="23" viewBox="0 0 25 23"><path d="M0 1q0-1 1-1h8l2 3v5H0z" fill="#d99a16" /><path d="M0 6h9l2-3h14v20H0z" fill="#fdcf45" /><path d="M4.500 23v-4q0-2 2-2h12q2 0 2 2v4z" fill="#1579cb" /></svg> },
  { on: true, i: <svg width="26" height="26" viewBox="0 0 26 26"><circle cx="13" cy="13" r="12.700" fill="#1583cf" /><path d="M1 10Q4 0 14 .3 25 1.500 25.700 11q0 6-6.500 6-5 0-3.500-3 1.500-5-4-6.500Q5 6.500 1 10z" fill="#3cc8a8" /><path d="M1 10Q4 0 14 .3 20 1 23 5 10 1 1 10z" fill="#38b6e6" /><path d="M9 12q-3 8 4 11 5 2 10-2.500-4 6-11 5Q4 24 4.500 17 5.500 11 9 9z" fill="#0b4f9e" /><path d="M11 12q-1 7 6 8.500 4 .5 7-1.500-4 4.500-9 3.500-7-2-4-10.500z" fill="#eaf0fb" /></svg> },
  { i: <svg width="25" height="25" viewBox="0 0 25 25"><path d="M7 6V2q0-1 1-1h9q1 0 1 1v4" fill="none" stroke="#3ab1ec" strokeWidth="1.700" /><path d="M0 5h25v17q0 2.500-2.500 2.500h-20Q0 24.500 0 22z" fill="#14497e" /><path d="M8 10h4v4.500H8z" fill="#f05a28" /><path d="M13 10h4v4.500h-4z" fill="#7fbb32" /><path d="M8 15.500h4V20H8z" fill="#2aa4ec" /><path d="M13 15.500h4V20h-4z" fill="#fcbb20" /></svg> },
  { i: <svg width="25" height="24" viewBox="0 0 25 24"><circle cx="13" cy="4" r="4" fill="#7b83eb" /><circle cx="21" cy="6" r="2.700" fill="#5059c9" /><path d="M8 9h11v9q-1 5-5.500 5T8 18z" fill="#7b83eb" /><path d="M19 10h6v6q-1 4-5 4z" fill="#5059c9" /><rect x="0" y="6" width="13" height="13" rx="1" fill="#4b53bc" /><path d="M3.500 9.500h6M6.500 9.500v6.500" stroke="#fff" strokeWidth="1.700" /></svg> },
  { run: true, i: <svg width="26" height="26" viewBox="0 0 26 26"><circle cx="13" cy="13" r="12.700" fill="#35a552" /><path d="M2 6.700A12.700 12.700 0 0 1 24.200 7H13L7.500 16z" fill="#e23c2f" /><path d="M24.300 7A12.700 12.700 0 0 1 12.500 25.700L18.500 16 17 7z" fill="#fcc934" /><circle cx="13" cy="13" r="6" fill="#fff" /><circle cx="13" cy="13" r="4.700" fill="#3a7df0" /></svg> },
  { i: <svg width="25" height="25" viewBox="0 0 25 25"><ellipse cx="9" cy="3" rx="6.500" ry="2.700" fill="#e8a33c" /><path d="M2.500 3v14q6 4 13 0V3q-6 4-13 0z" fill="#fbd65a" /><path d="M18 1h5.500v6M1 18v6h6" fill="none" stroke="#3f9e4f" strokeWidth="2" /><path d="m11 13 10.500 11M20 15 11 24" stroke="#e8762c" strokeWidth="1.900" /><path d="M18 12.500q0 4 5 3.500M9.500 15l4.500-3.500" fill="none" stroke="#e8762c" strokeWidth="1.800" /></svg> },
  { i: <svg width="26" height="26" viewBox="0 0 26 26"><path d="M0 8l3-2 16 13v6L5 14l-2 5-3-1z" fill="#7b3fb8" /><path d="M0 18l3 2L19 7V1L3 16z" fill="#52307c" /><path d="m19 0 6.500 3v20L19 26z" fill="#b67bf0" /></svg> },
  { run: true, i: <PbiLogo w={18} h={26} /> },
];

export default function App() {
  return (
    <Screen>
      <Global />
      <TabStrip>
        <Slot $w={49}><Ico s={16} w={1.8} c="#222"><rect x="1.500" y="1.500" width="17" height="17" rx="2.500" /><path d="M2 4h16" strokeWidth="3" /><path d="M6 5v13" strokeWidth="1.600" /></Ico></Slot>
        <BrowserTab>
          <PbiLogo w={16} h={17} />
          <TabTitle>yarab - Power BI</TabTitle>
          <Ico s={10} w={1.8} c="#222"><path d="m2 2 16 16M18 2 2 18" /></Ico>
        </BrowserTab>
        <Slot $w={36}><Ico s={15} w={1.6} c="#222"><path d="M10 1v18M1 10h18" /></Ico></Slot>
        <Spacer />
        <Slot $w={48}><svg width="11" height="1"><path d="M0 .5h11" stroke="#222" /></svg></Slot>
        <Slot $w={48}><Ico s={12} w={1.8} c="#222"><rect x="1" y="4" width="14.500" height="15" rx="3" /><path d="M5 1h10q4 0 4 4v10" /></Ico></Slot>
        <Slot $w={48}><Ico s={12} w={1.6} c="#222"><path d="m1 1 18 18M19 1 1 19" /></Ico></Slot>
      </TabStrip>
      <AddressRow>
        <Slot $w={58}><Ico s={17} w={1.5} c="#222"><path d="M19 10H1M9 2l-8 8 8 8" /></Ico></Slot>
        <Slot $w={46} $start $pl={8}><Ico s={18} w={1.5} c="#222"><path d="M18 6A9 9 0 1 0 19 10M18.500 1.500V6.500H13" /></Ico></Slot>
        <AddressPill>
          <Slot $w={51} $pl={3}><Ico s={16} w={1.4} c="#666"><rect x="2.500" y="7" width="15" height="12" rx="2" /><path d="M6 7V5q0-4 4-4t4 4v2" /><circle cx="10" cy="13" r=".8" fill="#444" /></Ico></Slot>
          <Url>https://<b>app.powerbi.com</b>/groups/me/reports/edb0a790-e2ee-4f62-b2c7-b514ce98ff42/ReportSection?experience=power-bi&amp;bookmarkGuid=Bookmarkb056e9bdd7b3f0f5...</Url>
          <Slot $w={32}><Ico s={17} w={1.5} c="#666"><path d="M1 18 6.500 4 12 18M3 13h7M12 3q3 1.500 3 6M14.500 1q4 2.500 4 8" /></Ico></Slot>
          <Slot $w={43}><Ico s={18} w={1.4} c="#666"><path d="m8 15-4.500 3 1-6.500L.8 7.500 6.500 6.500 9.500 1l2.500 5.500 6.500 1L16.500 9" /><circle cx="14.500" cy="14.500" r="5.200" fill="#666" stroke="none" /><path d="M14.500 12v5M12 14.500h5" stroke="#fff" /></Ico></Slot>
        </AddressPill>
        <Slot $w={60}><Ico s={18} w={1.5} c="#222"><path d="m8 14.500-5.500 4 2-7L.8 7.500l5.200-.7L8.500 1 11 6.500h8M13 11h6M12 15.500h7" /></Ico></Slot>
        <Slot $w={31}><Ico s={18} w={1.5} c="#222"><rect x="6.500" y="6.500" width="13" height="13" rx="2" /><path d="M13 9.500v7M9.500 13h7M4 13.500Q1 8 .8 5q0-1.500 1.500-2L11 .8q2-.3 2.500 2.200" /></Ico></Slot>
        <Slot $w={64}>
          <svg width="24" height="24"><circle cx="12" cy="12" r="12" fill="#d3d0ce" /><circle cx="12" cy="8.500" r="5" fill="#7b7672" /><path d="M4 21q0-6 8-6t8 6q-8 6-16 0z" fill="#7b7672" /></svg>
        </Slot>
        <Slot $w={32}><Ico s={16}><g fill="#222" stroke="none"><circle cx="2.500" cy="10" r="1.600" /><circle cx="10" cy="10" r="1.600" /><circle cx="17.500" cy="10" r="1.600" /></g></Ico></Slot>
        <Spacer />
        <Slot $w={43.5} $start $mt={2}><BingLogo /></Slot>
      </AddressRow>
      <Body>
        <Site>
          <AppHeader>
            <Slot $w={71}>
              <svg width="17" height="17" fill="#444">{[1.5, 8.5, 15.5].map(y => [1.5, 8.5, 15.5].map(x => <circle key={x + "-" + y} cx={x} cy={y} r="1.300" />))}</svg>
            </Slot>
            <Slot $w={52} $start $pl={8}><HeaderText $dark>yarab</HeaderText></Slot>
            <VLine $h={21} />
            <Slot $w={170} $start $pl={16.5}><HeaderText>Data updated 5/24/23</HeaderText></Slot>
            <Slot $w={12} $start><Chevron /></Slot>
            <Spacer />
            <Slot $w={52}><Ico s={18} w={1.3}><path d="M2.500 15.500Q4 13 4 8q0-7 6-7t6 7q0 5 1.500 7.500zM8 16q0 3 2 3t2-3" /></Ico></Slot>
            <Slot $w={52}><Gear s={20} w={1.2} /></Slot>
            <Slot $w={49}><Ico s={18} w={1.3}><path d="M10 1v14M4.500 10l5.500 5.500L15.500 10M3 19h14" /></Ico></Slot>
            <Slot $w={51}><Ico s={17} w={1.3}><path d="M5.500 6q0-4.500 4.500-4.500T14.500 6q0 2.500-3 4.500Q10 12 10 14M10 18v.4" /></Ico></Slot>
            <Slot $w={50}><Ico s={18} w={1.2}><circle cx="10" cy="10" r="9" /><path d="M6 12.500q4 4 8 0" /><circle cx="7" cy="7.500" r=".7" fill="#444" /><circle cx="13" cy="7.500" r=".7" fill="#444" /></Ico></Slot>
            <Slot $w={57}><Avatar><Ico s={18} c="#fff" w={1.6}><circle cx="10" cy="6" r="4.500" /><path d="M2 18.500q1-7.500 8-7.500t8 7.500" /></Ico></Avatar></Slot>
          </AppHeader>
          <AppBody>
            <SideNav />
            <Workspace>
              <ReportToolbar />
              <CanvasRow>
                <Canvas><ReportPage /></Canvas>
                <FilterPane>
                  <Ico s={8} w={3.2} c="#333"><path d="m9 2-7 8 7 8M17 2l-7 8 7 8" /></Ico>
                  <Slot $w={15} $mt={20} $end><svg width="9" height="10"><path d="M8 0v10M5 2v6M2 4v2" stroke="#444" strokeWidth="1.300" /></svg></Slot>
                  <FilterTitle>Filters</FilterTitle>
                </FilterPane>
              </CanvasRow>
              <StatusBar>
                <Slot $w={9} $start><svg width="6" height="2"><path d="M0 1h5" stroke="#444" strokeWidth="1.500" /></svg></Slot>
                <svg width="106" height="12"><path d="M0 6h105" stroke="#888" /><rect x="44" y="0" width="4" height="12" fill="#444" /><rect x="52.500" y="3" width="1.500" height="6" fill="#666" /></svg>
                <Slot $w={16.5}><svg width="8" height="8"><path d="M4 0v8M0 4h8" stroke="#444" strokeWidth="1.300" /></svg></Slot>
                <Slot $w={59.5}><ZoomText>88%</ZoomText></Slot>
                <Slot $w={39} $start><svg width="15" height="11" fill="none" stroke="#555"><rect x=".5" y=".5" width="14" height="10" rx="1" /><path d="M3 4.500V3h2M10 3h2v1.500M12 6.500V8h-2M5 8H3V6.500" /></svg></Slot>
              </StatusBar>
            </Workspace>
          </AppBody>
        </Site>
        <EdgeBar>
          {edgeIcons.map((icon, i) => <EdgeItem key={i}>{icon}</EdgeItem>)}
          <EdgeItem $h={47}><Ico s={13} c="#222" w={1.6}><path d="M10 1v18M1 10h18" /></Ico></EdgeItem>
          <Spacer />
          <EdgeDivider />
          <EdgeItem><Ico s={15} w={1.8} c="#222"><rect x="1" y="1.500" width="18" height="17" rx="2.500" /><path d="M14 2v16" /></Ico></EdgeItem>
          <EdgeItem $h={43}><Gear s={19} c="#222" w={1.5} /></EdgeItem>
        </EdgeBar>
      </Body>
      <Taskbar>
        <Slot $w={54.5} $start $pl={21}>
          <svg width="26" height="25" viewBox="0 0 26 25"><path d="M15 2a10 10 0 0 1 0 19q-8 4-13-4 9 1 13-6 2-4 0-9z" fill="#f0a63a" /><path d="M3 10a3 3 0 0 1 0-5.500Q5 1 9 2.500q3-.5 3.500 2.500 3 1 1.500 5z" fill="#a9c4ee" /><path d="M14 22a2.500 2.500 0 0 1 1-4.500q2-3.500 5-2 3 0 3 2.500 3 1 1.500 4z" fill="#9fbdf0" /></svg>
        </Slot>
        <Weather>70°F<small>Partly cloudy</small></Weather>
        <Slot $w={39.5} $start>
          <svg width="25" height="25"><g fill="#1486d8"><rect width="12" height="12" rx="1" fill="#35aaf0" /><rect x="13" width="12" height="12" rx="1" fill="#2399e4" /><rect y="13" width="12" height="12" rx="1" /><rect x="13" y="13" width="12" height="12" rx="1" fill="#0a74cf" /></g></svg>
        </Slot>
        <SearchPill><Ico s={15} w={1.9} c="#222"><circle cx="12" cy="8" r="6.500" /><path d="m7.500 13-6 6" /></Ico>Search</SearchPill>
        <Slot $w={3.8} />
        {taskIcons.map((t, i) => <AppIcon key={i} $on={t.on} $run={t.run}>{t.i}</AppIcon>)}
        <Spacer />
        <Slot $w={23}><Ico s={13} w={1.6} c="#222"><path d="m1 14 9-9 9 9" /></Ico></Slot>
        <Slot $w={27}><svg width="17" height="12" viewBox="0 0 17 12"><path d="M4 11.300Q.7 11 .7 8q.3-2.500 3-3Q5 .7 8.500.8q3 .2 4 3 3.700.5 3.800 4-.3 3.300-3.300 3.500z" fill="#999" stroke="#333" strokeWidth="1.100" /></svg></Slot>
        <Slot $w={22}><Ico s={18} w={1.6} c="#333"><path d="M1 9Q2 2 9 1.500q5-.2 8 4V1M19 11M17 5.500h-4.500M3 13q2 4 6 5" /><circle cx="15" cy="14.500" r="4.700" fill="#0a74cf" stroke="none" /></Ico></Slot>
        <Slot $w={48}><TrayText>ENG</TrayText></Slot>
        <Slot $w={30}><Ico s={17} w={1.5} c="#222"><path d="M1 7.500q9-8 18 0M4 11q6-5.500 12 0M7 14.200q3-2.500 6 0" /><circle cx="10" cy="16.800" r="1" fill="#222" /></Ico></Slot>
        <Slot $w={18}><Ico s={16} w={1.5} c="#222"><path d="M1 7h3.500L10 2v16l-5.500-5H1zM13 7q2 3 0 6" /><path d="M16 5q3.500 5 0 10" stroke="#999" /></Ico></Slot>
        <Slot $w={34}><svg width="18" height="11"><rect x=".6" y=".6" width="14.500" height="9.800" rx="2" fill="none" stroke="#222" strokeWidth="1.200" /><rect x="2.500" y="2.500" width="10.500" height="6" fill="#222" /><rect x="16" y="3.500" width="1.500" height="4" fill="#222" /></svg></Slot>
        <Slot $w={65} $end><TrayText>8:52 PM<br />5/24/2023</TrayText></Slot>
        <Slot $w={46} $start $pl={8}><Badge>2</Badge></Slot>
      </Taskbar>
    </Screen>
  );
}
